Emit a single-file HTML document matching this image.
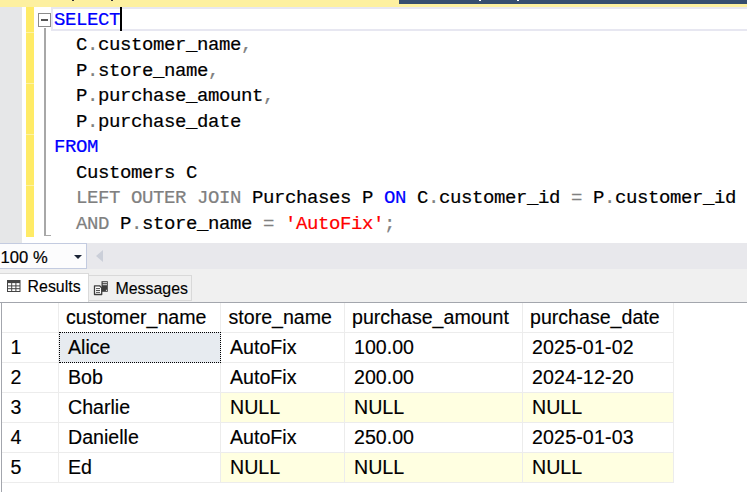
<!DOCTYPE html>
<html>
<head>
<meta charset="utf-8">
<title>SSMS</title>
<style>
html,body{margin:0;padding:0;}
body{width:747px;height:492px;position:relative;overflow:hidden;background:#fff;font-family:"Liberation Sans",sans-serif;color:#000;}
.abs{position:absolute;}
/* editor */
#topstrip{left:0;top:0;width:747px;height:7px;background:#fdf0a0;}
#toptab{left:399px;top:0;width:348px;height:3.6px;background:#364e6f;}
#gutter{left:0;top:7px;width:22px;height:236px;background:#e6e7e8;}
#chg{left:26px;top:7px;width:8px;height:229.5px;background:#ffeb66;}
#curline{left:51px;top:7px;width:700px;height:19.8px;border:2.8px solid #e7e7f1;background:#fff;}
#caret{left:120px;top:7px;width:1.8px;height:23.5px;background:#000;}
#fold{left:38px;top:13px;width:11px;height:12px;border:1.2px solid #8c8c8c;background:#fff;}
#foldm{left:40.8px;top:19.4px;width:7px;height:1.4px;background:#555;}
#outv{left:44.2px;top:28px;width:1.8px;height:208px;background:#a8a8a8;}
#outh{left:44.2px;top:234.6px;width:6.8px;height:1.8px;background:#a8a8a8;}
.code{left:0;white-space:pre;font-family:"Liberation Mono",monospace;font-size:19px;letter-spacing:-0.402px;line-height:25.5px;height:25.5px;color:#000;-webkit-text-stroke:0.2px;}
.k{color:#0000ff;}
.g{color:#808080;}
.s{color:#ff0000;}
/* zoom bar */
#zbar{left:0;top:243px;width:747px;height:26px;background:#e8e8ec;}
#zbox{left:-1px;top:243px;width:86px;height:24.4px;border:1.2px solid #c3cbe0;background:#fcfcfd;}
#ztxt{left:0.6px;top:248.2px;font-size:16.6px;line-height:20px;color:#000;white-space:pre;-webkit-text-stroke:0.2px;}
#zarr{left:74px;top:255px;width:0;height:0;border-left:4.7px solid transparent;border-right:4.7px solid transparent;border-top:4.7px solid #1b2436;}
#sarr{left:96.3px;top:250px;width:0;height:0;border-top:6.5px solid transparent;border-bottom:6.5px solid transparent;border-right:7.5px solid #cbcfd9;}
#tabrow{left:0;top:269px;width:747px;height:33px;background:#f0f0f0;}
#tabR{left:-1px;top:273px;width:87.6px;height:29px;border:1px solid #dadada;border-bottom:none;background:#fff;}
#tabM{left:87.6px;top:275px;width:102.6px;height:24.3px;border:1px solid #d9d9d9;background:#f0f0f0;}
.tt{font-size:15.9px;line-height:20px;white-space:pre;color:#000;-webkit-text-stroke:0.12px;}
/* grid */
#gridbg{left:0;top:302px;width:747px;height:191px;background:#fff;}
#gtop{left:0;top:302px;width:747px;height:1px;background:#a3a6ad;}
#gleft{left:1.3px;top:302px;width:1px;height:190px;background:#a3a6ad;}
.vl{width:1px;background:#ececec;top:302px;height:180px;}
.hl{height:1px;background:#ececec;left:2px;width:672px;}
.cell{font-size:19.6px;line-height:30px;height:30px;white-space:pre;color:#000;-webkit-text-stroke:0.15px;}
.nul{background:#ffffe1;}
</style>
</head>
<body>
<!-- editor -->
<div class="abs" id="topstrip"></div>
<div class="abs" id="toptab"></div>
<div class="abs" style="left:72px;top:0;width:2px;height:1px;background:#333"></div>
<div class="abs" style="left:111px;top:0;width:2px;height:1px;background:#333"></div>
<div class="abs" style="left:479px;top:0;width:2px;height:1px;background:#fff"></div>
<div class="abs" style="left:517px;top:0;width:2px;height:1px;background:#fff"></div>
<div class="abs" id="gutter"></div>
<div class="abs" id="chg"></div>
<div class="abs" style="left:26px;top:32px;width:8px;height:1px;background:#fff3a6"></div>
<div class="abs" style="left:26px;top:83px;width:8px;height:1px;background:#fff3a6"></div>
<div class="abs" style="left:26px;top:134px;width:8px;height:1px;background:#fff3a6"></div>
<div class="abs" style="left:26px;top:185px;width:8px;height:1px;background:#fff3a6"></div>
<div class="abs" id="curline"></div>
<div class="abs" id="fold"></div>
<div class="abs" id="foldm"></div>
<div class="abs" id="outv"></div>
<div class="abs" id="outh"></div>

<div class="abs code" style="left:54px;top:7.8px"><span class="k">SELECT</span></div>
<div class="abs code" style="left:76px;top:33.3px">C<span class="g">.</span>customer_name<span class="g">,</span></div>
<div class="abs code" style="left:76px;top:58.8px">P<span class="g">.</span>store_name<span class="g">,</span></div>
<div class="abs code" style="left:76px;top:84.3px">P<span class="g">.</span>purchase_amount<span class="g">,</span></div>
<div class="abs code" style="left:76px;top:109.8px">P<span class="g">.</span>purchase_date</div>
<div class="abs code" style="left:54px;top:135.3px"><span class="k">FROM</span></div>
<div class="abs code" style="left:76px;top:160.8px">Customers C</div>
<div class="abs code" style="left:76px;top:186.3px"><span class="g">LEFT OUTER JOIN</span> Purchases P <span class="k">ON</span> C<span class="g">.</span>customer_id <span class="g">=</span> P<span class="g">.</span>customer_id</div>
<div class="abs code" style="left:76px;top:211.8px"><span class="g">AND</span> P<span class="g">.</span>store_name <span class="g">=</span> <span class="s">'AutoFix'</span><span class="g">;</span></div>
<div class="abs" id="caret"></div>

<!-- zoom bar -->
<div class="abs" id="zbar"></div>
<div class="abs" id="zbox"></div>
<div class="abs" id="ztxt">100 %</div>
<div class="abs" id="zarr"></div>
<div class="abs" id="sarr"></div>

<!-- tabs -->
<div class="abs" id="tabrow"></div>
<div class="abs" id="tabM"></div>
<div class="abs" id="tabR"></div>
<svg class="abs" style="left:7px;top:280px" width="14" height="12" viewBox="0 0 14 12">
  <rect x="0.5" y="0.5" width="12.5" height="11" fill="#fff" stroke="#444" stroke-width="1"/>
  <rect x="0.5" y="0.5" width="12.5" height="2.6" fill="#444"/>
  <path d="M0.5 5.9H13M0.5 8.7H13M4.7 3V11.5M8.9 3V11.5" stroke="#444" stroke-width="1" fill="none"/>
</svg>
<div class="abs tt" style="left:27.6px;top:276.5px">Results</div>
<svg class="abs" style="left:93px;top:280px" width="16" height="16" viewBox="0 0 16 16">
  <rect x="8.5" y="1.2" width="6.3" height="10.6" fill="#3d3d3d"/>
  <rect x="9.7" y="2.2" width="4.3" height="1" fill="#e6e6e6"/>
  <rect x="9.7" y="4.2" width="4.3" height="1" fill="#e6e6e6"/>
  <rect x="12.9" y="9.8" width="1.1" height="1.1" fill="#e6e6e6"/>
  <path d="M1.5 5.8H6.6L8.7 7.9V14.5H1.5Z" fill="#fff" stroke="#3d3d3d" stroke-width="1.3" stroke-linejoin="round"/>
  <path d="M3 8.6H7M3 10.5H7M3 12.4H7" stroke="#3d3d3d" stroke-width="0.9"/>
</svg>
<div class="abs tt" style="left:115.5px;top:278.5px">Messages</div>

<!-- grid -->
<div class="abs" id="gridbg"></div>
<!-- NULL row backgrounds -->
<div class="abs nul" style="left:220.5px;top:393px;width:453px;height:29px"></div>
<div class="abs nul" style="left:220.5px;top:453px;width:453px;height:29px"></div>
<!-- lines -->
<div class="abs hl" style="top:332px"></div>
<div class="abs hl" style="top:362px"></div>
<div class="abs hl" style="top:392px"></div>
<div class="abs hl" style="top:422px"></div>
<div class="abs hl" style="top:452px"></div>
<div class="abs hl" style="top:482px"></div>
<div class="abs vl" style="left:58px"></div>
<div class="abs vl" style="left:220px"></div>
<div class="abs vl" style="left:344px"></div>
<div class="abs vl" style="left:522px"></div>
<div class="abs vl" style="left:673.4px"></div>
<div class="abs" style="left:59px;top:332px;width:160px;height:28.6px;background:#e7ebf0;border:1px dotted #000;box-sizing:content-box"></div>
<div class="abs" id="gtop"></div>
<div class="abs" id="gleft"></div>

<!-- header -->
<div class="abs cell" style="left:66px;top:302px">customer_name</div>
<div class="abs cell" style="left:228.5px;top:302px">store_name</div>
<div class="abs cell" style="left:352px;top:302px">purchase_amount</div>
<div class="abs cell" style="left:530px;top:302px">purchase_date</div>
<!-- rows -->
<div class="abs cell" style="left:10.5px;top:332px">1</div>
<div class="abs cell" style="left:68px;top:332px">Alice</div>
<div class="abs cell" style="left:230px;top:332px">AutoFix</div>
<div class="abs cell" style="left:354px;top:332px">100.00</div>
<div class="abs cell" style="left:532px;top:332px;letter-spacing:0.15px">2025-01-02</div>

<div class="abs cell" style="left:10.5px;top:362px">2</div>
<div class="abs cell" style="left:68px;top:362px">Bob</div>
<div class="abs cell" style="left:230px;top:362px">AutoFix</div>
<div class="abs cell" style="left:354px;top:362px">200.00</div>
<div class="abs cell" style="left:532px;top:362px;letter-spacing:0.15px">2024-12-20</div>

<div class="abs cell" style="left:10.5px;top:392px">3</div>
<div class="abs cell" style="left:68px;top:392px">Charlie</div>
<div class="abs cell" style="left:230px;top:392px">NULL</div>
<div class="abs cell" style="left:354px;top:392px">NULL</div>
<div class="abs cell" style="left:532px;top:392px">NULL</div>

<div class="abs cell" style="left:10.5px;top:422px">4</div>
<div class="abs cell" style="left:68px;top:422px">Danielle</div>
<div class="abs cell" style="left:230px;top:422px">AutoFix</div>
<div class="abs cell" style="left:354px;top:422px">250.00</div>
<div class="abs cell" style="left:532px;top:422px;letter-spacing:0.15px">2025-01-03</div>

<div class="abs cell" style="left:10.5px;top:452px">5</div>
<div class="abs cell" style="left:68px;top:452px">Ed</div>
<div class="abs cell" style="left:230px;top:452px">NULL</div>
<div class="abs cell" style="left:354px;top:452px">NULL</div>
<div class="abs cell" style="left:532px;top:452px">NULL</div>
</body>
</html>
